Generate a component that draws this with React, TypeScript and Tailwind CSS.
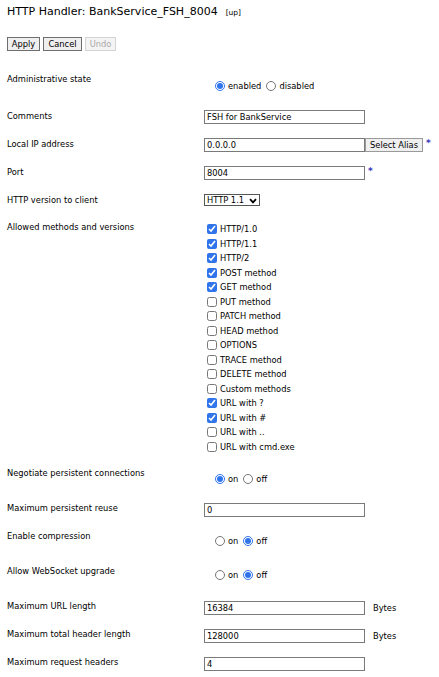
import React from 'react'

const methods: [string, boolean][] = [
  ['HTTP/1.0', true],
  ['HTTP/1.1', true],
  ['HTTP/2', true],
  ['POST method', true],
  ['GET method', true],
  ['PUT method', false],
  ['PATCH method', false],
  ['HEAD method', false],
  ['OPTIONS', false],
  ['TRACE method', false],
  ['DELETE method', false],
  ['Custom methods', false],
  ['URL with ?', true],
  ['URL with #', true],
  ['URL with ..', false],
  ['URL with cmd.exe', false],
]

function Row({ label, className, children }: { label: string; className: string; children?: React.ReactNode }) {
  return (
    <div className={`flex items-start ${className}`}>
      <div className="w-[197px] shrink-0 leading-[14px]">{label}</div>
      <div className="flex-1 min-w-0">{children}</div>
    </div>
  )
}

function TextBox({ value }: { value: string }) {
  return (
    <input
      type="text"
      defaultValue={value}
      className="w-[161px] h-[14px] border border-[#7a7a7a] bg-white px-[2px] text-[8.3px] leading-[12px] text-black outline-none"
    />
  )
}

function Star({ className }: { className: string }) {
  return <span className={`text-[#3636b8] font-bold text-[9px] leading-none ${className}`}>*</span>
}

function RadioPair({ name, a, b, first }: { name: string; a: string; b: string; first: boolean }) {
  return (
    <div className="flex items-center pl-[11px]">
      <input type="radio" name={name} defaultChecked={first} className="m-0 w-[10px] h-[10px] accent-[#2f74ea]" />
      <span className="ml-[3px] mr-[5px] leading-[12px]">{a}</span>
      <input type="radio" name={name} defaultChecked={!first} className="m-0 w-[10px] h-[10px] accent-[#2f74ea]" />
      <span className="ml-[3px] leading-[12px]">{b}</span>
    </div>
  )
}

export default function App() {
  return (
    <div className="w-[439px] min-h-[677px] bg-white px-[7px] pt-[4px] text-black text-[8.3px]" style={{ fontFamily: '"DejaVu Sans", Verdana, sans-serif' }}>
      {/* Titre */}
      <div className="flex items-baseline h-[15px]">
        <span className="text-[11px] leading-[15px]">HTTP Handler: BankService_FSH_8004</span>
        <span className="ml-[8px] text-[7.5px]">[up]</span>
      </div>

      {/* Boutons */}
      <div className="flex gap-[3px] mt-[18px]">
        <button className="h-[14px] w-[33px] border border-[#6e6e6e] bg-[#efefef] text-[8.3px] leading-[12px]">Apply</button>
        <button className="h-[14px] w-[39px] border border-[#6e6e6e] bg-[#efefef] text-[8.3px] leading-[12px]">Cancel</button>
        <button disabled className="h-[14px] w-[31px] border border-[#d4d4d4] bg-[#f4f4f4] text-[8.3px] leading-[12px] text-[#a9a9a9]">Undo</button>
      </div>

      <div className="mt-[21px]">
        <Row label="Administrative state" className="h-[37px]">
          <div className="pt-[8px]">
            <RadioPair name="admin" a="enabled" b="disabled" first={true} />
          </div>
        </Row>

        <Row label="Comments" className="h-[28px]">
          <div className="pt-[1px]">
            <TextBox value="FSH for BankService" />
          </div>
        </Row>

        <Row label="Local IP address" className="h-[28px]">
          <div className="pt-[1px] flex items-start">
            <TextBox value="0.0.0.0" />
            <button className="h-[14px] w-[58px] border border-[#9a9a9a] bg-[#efefef] text-[8.3px] leading-[12px]">Select Alias</button>
            <Star className="ml-[3px] mt-[1px]" />
          </div>
        </Row>

        <Row label="Port" className="h-[28px]">
          <div className="pt-[1px] flex items-start">
            <TextBox value="8004" />
            <Star className="ml-[3px] mt-[1px]" />
          </div>
        </Row>

        <Row label="HTTP version to client" className="h-[27px]">
          <div className="pt-[1px]">
            <div className="inline-flex items-center h-[12px] w-[56px] border border-[#555] bg-white pl-[2px] pr-[2px] justify-between">
              <span className="leading-[10px]">HTTP 1.1</span>
              <svg width="8" height="6" viewBox="0 0 8 6" className="mt-[1px]">
                <path d="M1 1.2 L4 4.4 L7 1.2" fill="none" stroke="#000" strokeWidth="1.8" />
              </svg>
            </div>
          </div>
        </Row>

        <Row label="Allowed methods and versions" className="h-[246px]">
          <div className="pt-[2px] flex flex-col">
            {methods.map(([m, on]) => (
              <label key={m} className="flex items-center h-[14.5px]">
                <input type="checkbox" defaultChecked={on} className="m-0 ml-[3px] w-[10px] h-[10px] accent-[#2f74ea]" />
                <span className="ml-[3px] leading-[12px]">{m}</span>
              </label>
            ))}
          </div>
        </Row>

        <Row label="Negotiate persistent connections" className="h-[35px]">
          <div className="pt-[7px]">
            <RadioPair name="persist" a="on" b="off" first={true} />
          </div>
        </Row>

        <Row label="Maximum persistent reuse" className="h-[28px]">
          <div className="pt-[2px]">
            <TextBox value="0" />
          </div>
        </Row>

        <Row label="Enable compression" className="h-[35px]">
          <div className="pt-[6px]">
            <RadioPair name="compress" a="on" b="off" first={false} />
          </div>
        </Row>

        <Row label="Allow WebSocket upgrade" className="h-[35px]">
          <div className="pt-[5px]">
            <RadioPair name="ws" a="on" b="off" first={false} />
          </div>
        </Row>

        <Row label="Maximum URL length" className="h-[28px]">
          <div className="pt-[2px] flex items-center">
            <TextBox value="16384" />
            <span className="ml-[8px]">Bytes</span>
          </div>
        </Row>

        <Row label="Maximum total header length" className="h-[28px]">
          <div className="pt-[2px] flex items-center">
            <TextBox value="128000" />
            <span className="ml-[8px]">Bytes</span>
          </div>
        </Row>

        <Row label="Maximum request headers" className="h-[20px]">
          <div className="pt-[2px]">
            <TextBox value="4" />
          </div>
        </Row>
      </div>
    </div>
  )
}
